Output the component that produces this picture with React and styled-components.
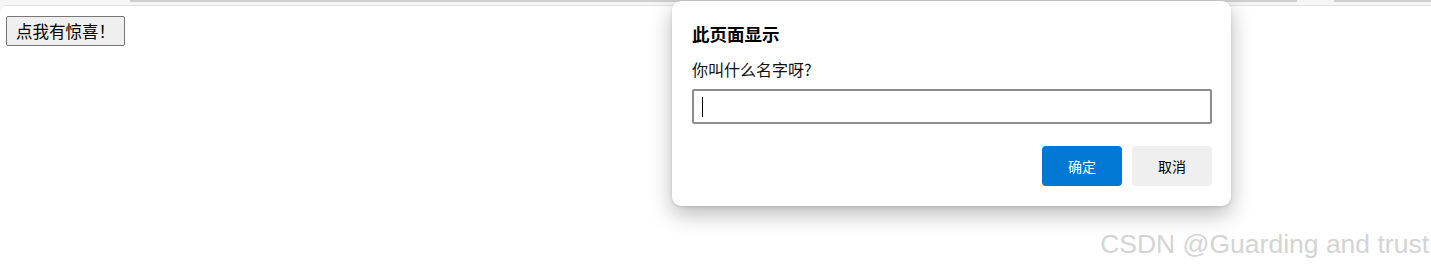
import React from 'react';
import styled, { createGlobalStyle } from 'styled-components';

const GlobalStyle = createGlobalStyle`
  html, body {
    margin: 0;
    padding: 0;
    background: #ffffff;
  }
  body {
    font-family: "Noto Sans CJK SC", "Noto Sans", sans-serif;
  }
`;

const Page = styled.div`
  position: relative;
  width: 1431px;
  height: 270px;
  overflow: hidden;
  background: #f5f5f5;
  display: flex;
  flex-direction: column;
`;

const TopStrip = styled.div`
  height: 5px;
  display: flex;
  padding-left: 130px;
  gap: 37px;
`;

const StripLine = styled.div`
  height: 1.5px;
  background: #cfcfcf;
  width: ${(p) => (p.$w ? `${p.$w}px` : 'auto')};
  flex: ${(p) => (p.$w ? 'none' : 1)};
`;

const Content = styled.div`
  flex: 1;
  background: #ffffff;
  border-top: 1px solid #e2e2e2;
  border-top-left-radius: 6px;
  padding: 10px 6px;
`;

const PageButton = styled.button`
  height: 30px;
  padding: 0 9px 0 9px;
  font-family: "Noto Sans CJK SC", sans-serif;
  font-size: 16.5px;
  line-height: 26px;
  color: #000;
  background: #efefef;
  border: 1px solid #767676;
  border-radius: 2px;
`;

const Dialog = styled.div`
  position: absolute;
  left: 672px;
  top: 1px;
  width: 559px;
  box-sizing: border-box;
  padding: 21px 19px 20px 20px;
  background: #ffffff;
  border-radius: 9px;
  box-shadow: 0 8px 22px rgba(0, 0, 0, 0.28), 0 1px 3px rgba(0, 0, 0, 0.12);
  display: flex;
  flex-direction: column;
`;

const Title = styled.div`
  font-size: 17.5px;
  line-height: 24px;
  font-weight: 700;
  color: #000;
`;

const Message = styled.div`
  margin-top: 12px;
  font-size: 16px;
  line-height: 22px;
  color: #111;
`;

const Field = styled.div`
  margin-top: 9px;
  height: 35px;
  box-sizing: border-box;
  border: 2px solid #8a8c90;
  border-radius: 2px;
  display: flex;
  align-items: center;
  padding-left: 8px;
`;

const Caret = styled.div`
  width: 1px;
  height: 20px;
  background: #000;
`;

const Actions = styled.div`
  margin-top: 22px;
  display: flex;
  justify-content: flex-end;
  gap: 10px;
`;

const ActionButton = styled.button`
  width: 80px;
  height: 40px;
  border: none;
  border-radius: 4px;
  font-family: "Noto Sans CJK SC", sans-serif;
  font-size: 14px;
  background: ${(p) => (p.$primary ? '#0078d4' : '#efefef')};
  color: ${(p) => (p.$primary ? '#ffffff' : '#000000')};
`;

const Watermark = styled.div`
  position: absolute;
  right: 2px;
  top: 229px;
  font-family: "Liberation Sans", Arial, sans-serif;
  font-size: 26.5px;
  font-weight: 400;
  line-height: 30px;
  color: #d4d4d4;
  text-shadow: 1px 1px 0 #ffffff;
  white-space: nowrap;
`;

export default function App() {
  return (
    <>
      <GlobalStyle />
      <Page>
        <TopStrip>
          <StripLine $w={1167} />
          <StripLine />
        </TopStrip>
        <Content>
          <PageButton>点我有惊喜！</PageButton>
        </Content>
        <Dialog>
          <Title>此页面显示</Title>
          <Message>你叫什么名字呀?</Message>
          <Field>
            <Caret />
          </Field>
          <Actions>
            <ActionButton $primary>确定</ActionButton>
            <ActionButton>取消</ActionButton>
          </Actions>
        </Dialog>
        <Watermark>CSDN @Guarding and trust</Watermark>
      </Page>
    </>
  );
}
